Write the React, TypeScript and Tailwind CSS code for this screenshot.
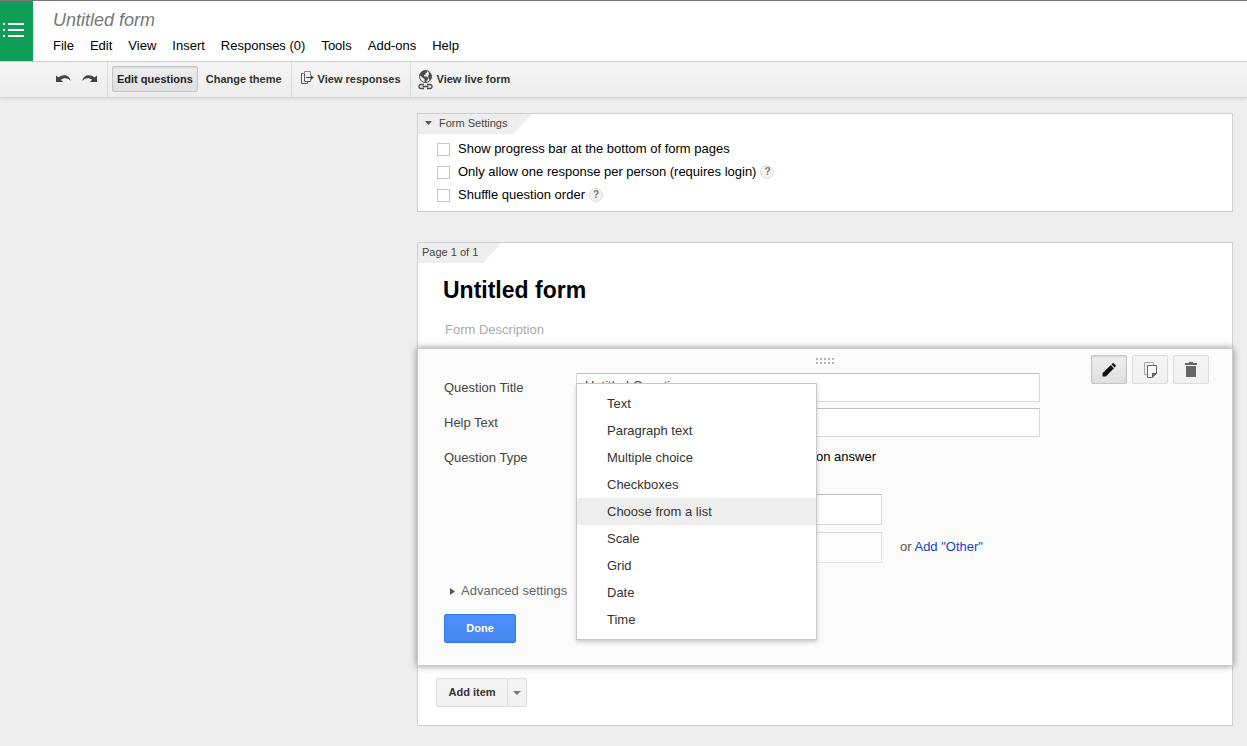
import { useState } from "react";

const menus = ["File", "Edit", "View", "Insert", "Responses (0)", "Tools", "Add-ons", "Help"];

const questionTypes = [
  "Text",
  "Paragraph text",
  "Multiple choice",
  "Checkboxes",
  "Choose from a list",
  "Scale",
  "Grid",
  "Date",
  "Time",
];

const settings = [
  { id: "progress", label: "Show progress bar at the bottom of form pages", help: false },
  { id: "single", label: "Only allow one response per person (requires login)", help: true },
  { id: "shuffle", label: "Shuffle question order", help: true },
];

const fieldClass =
  "border border-[#d9d9d9] border-t-[#c0c0c0] bg-white px-2 text-[13px] outline-none";
const checkboxClass =
  "mt-0.5 size-[13px] shrink-0 appearance-none border border-[#c6c6c6] bg-white checked:bg-[#4d90fe]";
const greyButton = "rounded-[2px] border border-[#dcdcdc] bg-linear-to-b from-[#f5f5f5] to-[#f1f1f1]";
const pressedButton =
  "rounded-[2px] border border-[#c6c6c6] bg-linear-to-b from-[#eeeeee] to-[#e0e0e0] shadow-[inset_0_1px_2px_rgba(0,0,0,0.1)]";

function UndoIcon({ flip = false }: { flip?: boolean }) {
  return (
    <svg width="15" height="9" viewBox="0 0 15 9" className={flip ? "-scale-x-100" : ""} aria-hidden="true">
      <path d="M0 .5v6.500h7L5 4.800C7.500 2.800 11.500 2.600 14.800 6 14 2.300 11.300.300 8.200.300 6 .300 4.200 1 2.600 2.500z" fill="#444" />
    </svg>
  );
}

function ResponsesIcon() {
  return (
    <svg width="13" height="17" viewBox="0 0 13 17" fill="none" aria-hidden="true">
      <path d="M3.500 2.500V.5h6V4M9.500 8v2.500" stroke="#8a8a8a" />
      <path d="M2.500 2.500h-2v10h6v-2M3.500 2.500v8h6" stroke="#555" />
      <path d="M5 6.500h7" stroke="#444" />
      <path d="M9.500 3.800 12.800 6.500 9.500 9.200z" fill="#444" />
    </svg>
  );
}

function LiveFormIcon() {
  return (
    <svg width="15" height="20" viewBox="0 0 15 20" fill="none" aria-hidden="true">
      <circle cx="7.500" cy="6.500" r="6" fill="#eee" stroke="#4a4a4a" />
      <path
        d="M1.500 5.500C1.800 3 4 .8 7 .5L9.500 1.200 9 2.500 7.500 3v1.500L6 5v1.500h3L10 8v1.500L8.500 10.500v2h-1l-1-1.500V9L5 8 3.500 6.500z"
        fill="#4a4a4a"
      />
      <path d="M10.500 2l2 1.500 1 3-.5 3-1.500.5-1-2-.5-2 1-1.500z" fill="#4a4a4a" />
      <path d="M6 14.500H3a2 2 0 0 0 0 4h3M9 14.500h3a2 2 0 0 1 0 4H9M4.500 16.500h6" stroke="#4a4a4a" strokeWidth="1.300" />
    </svg>
  );
}

function PencilIcon() {
  return (
    <svg width="14" height="14" viewBox="0 0 14 14" fill="#111" aria-hidden="true">
      <path d="M.5 13.500v-3.300L8.800 2l3.200 3.200-8.200 8.300z" />
      <path d="M9.500 1.300 10.300.6c.5-.5 1.200-.5 1.700 0L13.400 2c.5.5.5 1.200 0 1.700l-.7.800z" />
    </svg>
  );
}

function CopyIcon() {
  return (
    <svg width="13" height="16" viewBox="0 0 13 16" fill="none" aria-hidden="true">
      <path d="M3 12.500H.5V.5h9V3" stroke="#a8a8a8" />
      <path d="M3.500 3.500h9v8l-4 4h-5z" fill="#f7f7f7" stroke="#666" />
      <path d="M8 16v-5h5z" fill="#666" />
    </svg>
  );
}

function TrashIcon() {
  return (
    <svg width="12" height="15" viewBox="0 0 12 15" fill="#666" aria-hidden="true">
      <path d="M0 1h4V0h4v1h4v2H0zM1 4h10v11H1z" />
    </svg>
  );
}

function HelpBadge() {
  return (
    <button
      type="button"
      aria-label="Help"
      className="flex size-[14px] items-center justify-center rounded-full border border-[#dddddd] bg-[#f3f3f3] text-[10px] font-bold text-[#777777]"
    >
      ?
    </button>
  );
}

function FormSettings() {
  return (
    <section className="border border-[#cfcfcf] bg-white pb-[5px]">
      <button
        type="button"
        className="flex h-5 w-[114px] items-center gap-[7px] bg-[#eeeeee] pb-0.5 pl-[7px] text-[11px] text-[#444444] [clip-path:polygon(0_0,100%_0,calc(100%-19px)_100%,0_100%)]"
      >
        <svg width="7" height="4" viewBox="0 0 7 4" aria-hidden="true">
          <path d="M0 0h7L3.500 4z" fill="#555" />
        </svg>
        Form Settings
      </button>
      <div className="pt-[3px] pl-[19px]">
        {settings.map((s) => (
          <div key={s.id} className="flex h-[23px] items-center gap-1 text-[13px]">
            <label htmlFor={s.id} className="flex items-center gap-2">
              <input id={s.id} type="checkbox" className={checkboxClass} />
              {s.label}
            </label>
            {s.help && <HelpBadge />}
          </div>
        ))}
      </div>
    </section>
  );
}

function TypeMenu({ value, onPick }: { value: string; onPick: (v: string) => void }) {
  return (
    <ul
      role="listbox"
      aria-label="Question Type"
      className="absolute -top-[60px] left-0 z-10 w-[241px] border border-[#c8c8c8] bg-white py-[6px] text-[13px] text-[#333333] shadow-[0_2px_4px_rgba(0,0,0,0.2)]"
    >
      {questionTypes.map((t) => (
        <li key={t} role="option" aria-selected={t === value}>
          <button
            type="button"
            onClick={() => onPick(t)}
            className={`block h-[27px] w-full pl-[30px] text-left ${t === value ? "bg-[#eeeeee]" : ""}`}
          >
            {t}
          </button>
        </li>
      ))}
    </ul>
  );
}

function QuestionEditor() {
  const [type, setType] = useState("Choose from a list");
  return (
    <section className="relative -mx-px border border-[#cccccc] bg-[#fbfbfb] pb-[22px] pl-[26px] shadow-[0_0_7px_rgba(0,0,0,0.45)]">
      <div className="-ml-[26px] grid h-6 grid-cols-[1fr_auto_1fr] items-start">
        <span />
        <button type="button" aria-label="Move question" className="mt-[9px]">
          <svg width="18" height="6" viewBox="0 0 18 6" fill="#b5b5b5" aria-hidden="true">
            {[0, 4, 8, 12, 16].map((x) => (
              <path key={x} d={`M${x} 0h2v2h-2zM${x} 4h2v2h-2z`} />
            ))}
          </svg>
        </button>
        <div className="mt-[6px] flex justify-end gap-[5px] pr-[23px]">
          <button type="button" aria-label="Edit" className={`flex h-[29px] w-9 items-center justify-center ${pressedButton}`}>
            <PencilIcon />
          </button>
          <button type="button" aria-label="Duplicate" className={`flex h-[29px] w-9 items-center justify-center ${greyButton}`}>
            <CopyIcon />
          </button>
          <button type="button" aria-label="Delete" className={`flex h-[29px] w-9 items-center justify-center ${greyButton}`}>
            <TrashIcon />
          </button>
        </div>
      </div>

      <div className="grid grid-cols-[132px_1fr] items-center gap-y-[6px] text-[13px] text-[#444444]">
        <label htmlFor="q-title">Question Title</label>
        <input
          id="q-title"
          defaultValue="Untitled Question"
          className={`h-[29px] w-[464px] max-w-full pb-1 ${fieldClass}`}
        />
        <label htmlFor="q-help">Help Text</label>
        <input id="q-help" className={`h-[29px] w-[464px] max-w-full ${fieldClass}`} />
        <span>Question Type</span>
        <div className="relative flex h-[29px] items-center">
          <button
            type="button"
            aria-haspopup="listbox"
            aria-expanded="true"
            aria-label={type}
            className={`h-[27px] w-[115px] ${greyButton}`}
          />
          <label className="flex w-[185px] items-center justify-end gap-2 pb-0.5 whitespace-nowrap text-black">
            <input type="checkbox" className={checkboxClass} />
            Go to page based on answer
          </label>
          <TypeMenu value={type} onPick={setType} />
        </div>
      </div>

      <div className="mt-[22px] grid grid-cols-[286px_1fr] items-center gap-x-[18px] gap-y-[7px] pl-[152px] text-[13px] text-[#555555]">
        <input aria-label="Option 1" className={`h-[31px] ${fieldClass}`} />
        <span />
        <input
          aria-label="Add option"
          className="h-[31px] border border-[#e6e6e6] border-t-[#dddddd] bg-[#fdfdfd] px-2 outline-none"
        />
        <span className="pb-0.5">
          or{" "}
          <a href="#other" className="text-[#1144cc]">
            Add "Other"
          </a>
        </span>
      </div>

      <button type="button" className="mt-[18px] ml-[6px] flex h-5 items-center gap-[6px] text-[13px] text-[#666666]">
        <svg width="5" height="7" viewBox="0 0 5 7" aria-hidden="true">
          <path d="M0 0v7L5 3.500z" fill="#555" />
        </svg>
        Advanced settings
      </button>
      <button
        type="button"
        className="mt-[13px] block h-[29px] w-[72px] rounded-[2px] border border-[#3079ed] bg-linear-to-b from-[#4d90fe] to-[#4787ed] text-[11px] font-bold text-white"
      >
        Done
      </button>
    </section>
  );
}

export default function App() {
  return (
    <div className="flex min-h-screen flex-col bg-[#eeeeee] font-['Liberation_Sans',Arial,sans-serif] text-black">
      <header className="flex border-y border-t-[#777777] border-b-[#d5d5d5] bg-white">
        <a href="#forms" aria-label="Forms home" className="w-[33px] bg-[#0f9d58] pt-[22px] pl-[3px]">
          <svg width="21" height="14" viewBox="0 0 21 14" fill="#fff" aria-hidden="true">
            <path d="M0 0h2v2H0zM5 0h16v2H5zM0 6h2v2H0zM5 6h16v2H5zM0 12h2v2H0zM5 12h16v2H5z" />
          </svg>
        </a>
        <div className="pt-[7px] pb-[5px] pl-5">
          <h1 className="text-[18px] leading-6 text-[#777777] italic">Untitled form</h1>
          <nav className="mt-1 flex gap-4 text-[13px] leading-5">
            {menus.map((m) => (
              <button key={m} type="button">
                {m}
              </button>
            ))}
          </nav>
        </div>
      </header>

      <div
        role="toolbar"
        className="flex h-9 items-stretch border-b border-[#d5d5d5] bg-linear-to-b from-[#f5f5f5] to-[#eeeeee] pl-14 text-[11px] font-bold text-[#333333] shadow-[0_1px_3px_rgba(0,0,0,0.12)]"
      >
        <div className="flex items-center gap-[11px] border-r border-[#d9d9d9] pr-[10px]">
          <button type="button" aria-label="Undo">
            <UndoIcon />
          </button>
          <button type="button" aria-label="Redo">
            <UndoIcon flip />
          </button>
        </div>
        <div className="flex items-center border-r border-[#d9d9d9] pr-[9px] pb-px pl-1">
          <button type="button" className={`h-[26px] px-1 text-[#222222] ${pressedButton}`}>
            Edit questions
          </button>
          <button type="button" className="ml-2">
            Change theme
          </button>
        </div>
        <button type="button" className="flex items-center gap-1 border-r border-[#d9d9d9] pr-[9px] pl-[9px]">
          <ResponsesIcon />
          View responses
        </button>
        <button type="button" className="flex items-center gap-1 pl-[7px]">
          <LiveFormIcon />
          View live form
        </button>
      </div>

      <main className="flex flex-col gap-[30px] pt-[15px] pr-[14px] pb-5 pl-[417px]">
        <FormSettings />
        <section className="border border-[#cfcfcf] bg-white pb-[18px]">
          <div className="flex h-5 w-[84px] items-center bg-[#eeeeee] pb-0.5 pl-1 text-[11px] text-[#444444] [clip-path:polygon(0_0,100%_0,calc(100%-19px)_100%,0_100%)]">
            Page 1 of 1
          </div>
          <h2 className="mt-[13px] pl-[25px] text-[23px] leading-7 font-bold">Untitled form</h2>
          <input
            aria-label="Form Description"
            placeholder="Form Description"
            className="mt-[15px] mb-[9px] ml-[27px] block h-5 w-[464px] max-w-full text-[13px] outline-none placeholder:text-[#aaaaaa]"
          />
          <QuestionEditor />
          <div className="mt-3 ml-[18px] flex h-[29px] text-[11px] font-bold text-[#333333]">
            <button type="button" className={`w-[72px] ${greyButton}`}>
              Add item
            </button>
            <button type="button" aria-label="More item types" className={`-ml-px flex w-5 items-center justify-center ${greyButton}`}>
              <svg width="8" height="4" viewBox="0 0 8 4" aria-hidden="true">
                <path d="M0 0h8L4 4z" fill="#777" />
              </svg>
            </button>
          </div>
        </section>
      </main>
    </div>
  );
}
